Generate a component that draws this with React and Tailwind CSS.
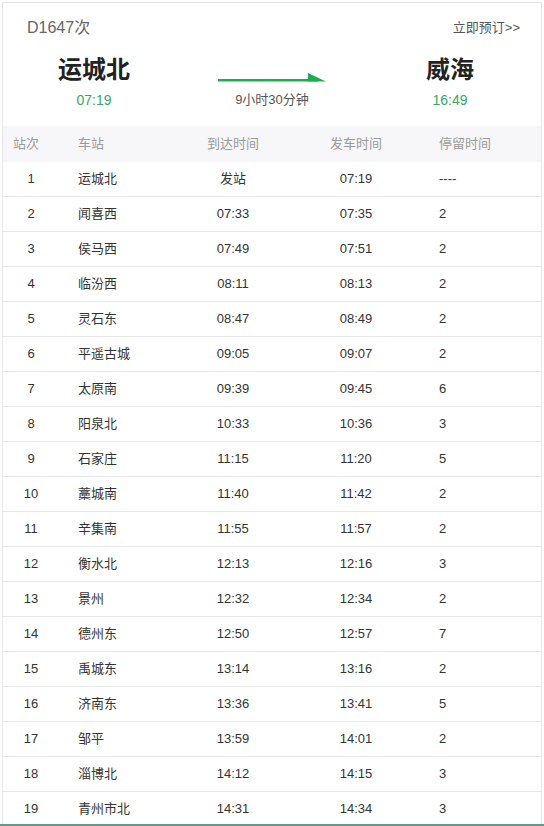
import React from "react";

const rows = [
  ["1", "运城北", "发站", "07:19", "----"],
  ["2", "闻喜西", "07:33", "07:35", "2"],
  ["3", "侯马西", "07:49", "07:51", "2"],
  ["4", "临汾西", "08:11", "08:13", "2"],
  ["5", "灵石东", "08:47", "08:49", "2"],
  ["6", "平遥古城", "09:05", "09:07", "2"],
  ["7", "太原南", "09:39", "09:45", "6"],
  ["8", "阳泉北", "10:33", "10:36", "3"],
  ["9", "石家庄", "11:15", "11:20", "5"],
  ["10", "藁城南", "11:40", "11:42", "2"],
  ["11", "辛集南", "11:55", "11:57", "2"],
  ["12", "衡水北", "12:13", "12:16", "3"],
  ["13", "景州", "12:32", "12:34", "2"],
  ["14", "德州东", "12:50", "12:57", "7"],
  ["15", "禹城东", "13:14", "13:16", "2"],
  ["16", "济南东", "13:36", "13:41", "5"],
  ["17", "邹平", "13:59", "14:01", "2"],
  ["18", "淄博北", "14:12", "14:15", "3"],
  ["19", "青州市北", "14:31", "14:34", "3"],
];

export default function App() {
  return (
    <div className="w-[544px] h-[826px] bg-white overflow-hidden border-b-2 border-[#5f9a8b] font-['Liberation_Sans','Noto_Sans_CJK_SC',sans-serif]">
      <div className="ml-[2px] mt-[2px] w-[540px] border border-[#e6e6e6]">
        <div className="flex justify-between items-center pt-[14px] pl-[24px] pr-[21px] h-[36px]">
          <span className="text-[16px] leading-[22px] text-[#666]">D1647次</span>
          <span className="text-[13px] leading-[22px] text-[#555]">立即预订&gt;&gt;</span>
        </div>
        <div className="grid grid-cols-[182px_174px_182px] mt-[15px]">
          <div className="flex flex-col items-center">
            <div className="text-[24px] leading-[32px] font-bold text-[#222]">运城北</div>
            <div className="mt-[4px] text-[14px] leading-[20px] text-[#38a865]">07:19</div>
          </div>
          <div className="flex flex-col items-center">
            <div className="h-[32px] pt-[19px]">
              <svg width="108" height="9" viewBox="0 0 108 9">
                <rect x="0" y="6" width="100" height="2.5" fill="#1fae4f" />
                <polygon points="90,0 108,8.5 90,8.5" fill="#1fae4f" />
              </svg>
            </div>
            <div className="mt-[4px] text-[13px] leading-[20px] text-[#555]">9小时30分钟</div>
          </div>
          <div className="flex flex-col items-center">
            <div className="text-[24px] leading-[32px] font-bold text-[#222]">威海</div>
            <div className="mt-[4px] text-[14px] leading-[20px] text-[#38a865]">16:49</div>
          </div>
        </div>
        <div className="mt-[16px] text-[13px]">
          <div className="flex items-center h-[36px] bg-[#f7f7f9] text-[#999]">
            <div className="w-[56px] pl-[10px]">站次</div>
            <div className="w-[124px] pl-[19px]">车站</div>
            <div className="w-[100px] text-center">到达时间</div>
            <div className="w-[146px] text-center">发车时间</div>
            <div className="flex-1 pl-[10px]">停留时间</div>
          </div>
          {rows.map((r) => (
            <div key={r[0]} className="flex items-center h-[35px] border-b border-[#e8e8e8] text-[#333]">
              <div className="w-[56px] text-center">{r[0]}</div>
              <div className="w-[124px] pl-[19px]">{r[1]}</div>
              <div className="w-[100px] text-center">{r[2]}</div>
              <div className="w-[146px] text-center">{r[3]}</div>
              <div className="flex-1 pl-[10px]">{r[4]}</div>
            </div>
          ))}
        </div>
      </div>
    </div>
  );
}
